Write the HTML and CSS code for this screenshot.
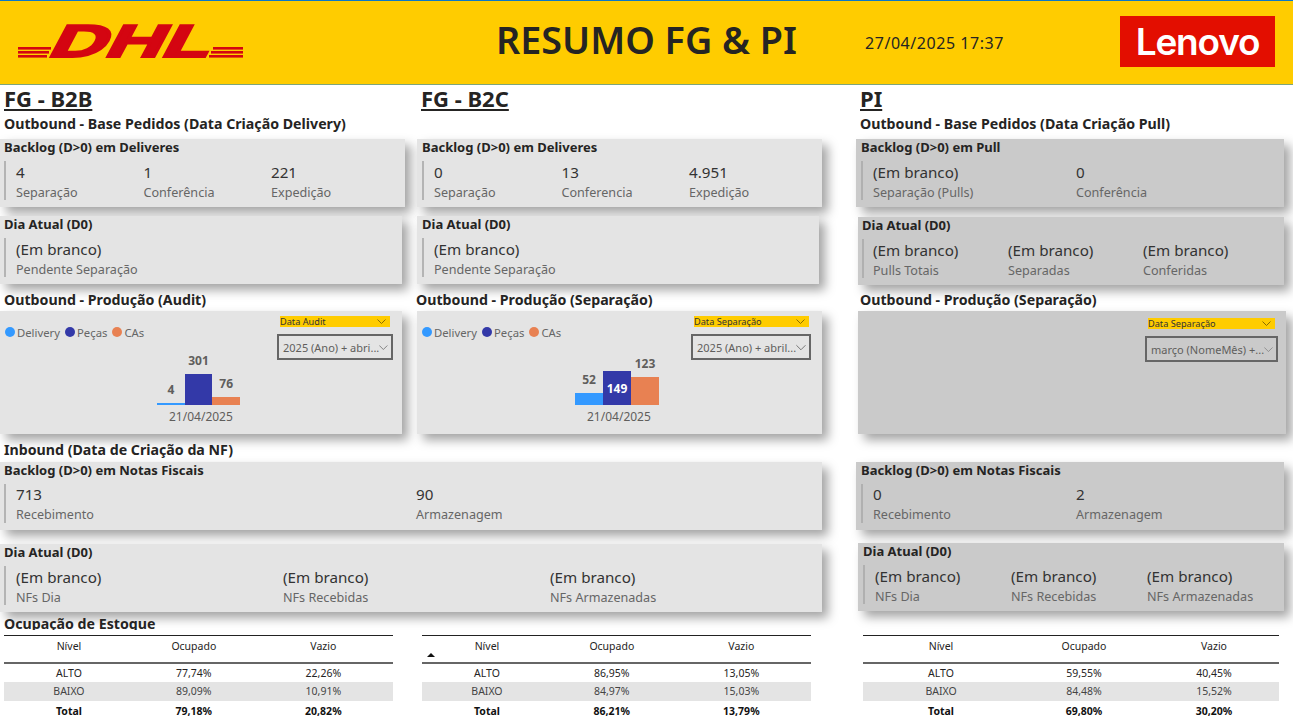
FILE: index.html
```html
<!DOCTYPE html>
<html lang="pt-BR">
<head>
    <meta charset="UTF-8">
    <title>Resumo FG & PI</title>
    <link rel="stylesheet" href="styles.css">
</head>
<body>
    <header class="topbar">
        <svg class="dhl" width="260" height="65" viewBox="0 0 260 65">
            <g fill="#d40511">
                <rect x="18" y="37" width="33" height="2.6"/><rect x="18" y="41" width="31" height="2.6"/><rect x="18" y="45" width="29" height="2.6"/>
                <rect x="213" y="37" width="30" height="2.6"/><rect x="211" y="41" width="32" height="2.6"/><rect x="209" y="45" width="34" height="2.6"/>
                <text class="dhl-text" transform="translate(46 46.5) skewX(-28) scale(1.7 1)" x="0" y="0">DHL</text>
            </g>
        </svg>
        <h1 class="title">RESUMO FG &amp; PI</h1>
        <div class="stamp">27/04/2025 17:37</div>
        <div class="lenovo">Lenovo</div>
    </header>

    <main class="dash">
        <h2 class="area">FG - B2B</h2>
        <h2 class="area">FG - B2C</h2>
        <h2 class="area">PI</h2>

        <h3 class="sub">Outbound - Base Pedidos (Data Criação Delivery)</h3>
        <div></div>
        <h3 class="sub">Outbound - Base Pedidos (Data Criação Pull)</h3>

        <section class="card">
            <h4>Backlog (D&gt;0) em Deliveres</h4>
            <div class="kpis">
                <div><b>4</b><span>Separação</span></div>
                <div><b>1</b><span>Conferência</span></div>
                <div><b>221</b><span>Expedição</span></div>
            </div>
        </section>
        <section class="card b2c">
            <h4>Backlog (D&gt;0) em Deliveres</h4>
            <div class="kpis">
                <div><b>0</b><span>Separação</span></div>
                <div><b>13</b><span>Conferencia</span></div>
                <div><b>4.951</b><span>Expedição</span></div>
            </div>
        </section>
        <section class="card pi">
            <h4>Backlog (D&gt;0) em Pull</h4>
            <div class="kpis k2">
                <div><b>(Em branco)</b><span>Separação (Pulls)</span></div>
                <div><b>0</b><span>Conferência</span></div>
            </div>
        </section>

        <section class="card short">
            <h4>Dia Atual (D0)</h4>
            <div class="kpis">
                <div><b>(Em branco)</b><span>Pendente Separação</span></div>
            </div>
        </section>
        <section class="card short b2c">
            <h4>Dia Atual (D0)</h4>
            <div class="kpis">
                <div><b>(Em branco)</b><span>Pendente Separação</span></div>
            </div>
        </section>
        <section class="card pi pi-dia">
            <h4>Dia Atual (D0)</h4>
            <div class="kpis k3-pi">
                <div><b>(Em branco)</b><span>Pulls Totais</span></div>
                <div><b>(Em branco)</b><span>Separadas</span></div>
                <div><b>(Em branco)</b><span>Conferidas</span></div>
            </div>
        </section>

        <h3 class="sub mid">Outbound - Produção (Audit)</h3>
        <h3 class="sub mid shift">Outbound - Produção (Separação)</h3>
        <h3 class="sub mid">Outbound - Produção (Separação)</h3>

        <section class="panel">
            <div class="chart">
                <div class="legend">
                    <i class="dot c1"></i><span>Delivery</span><i class="dot c2"></i><span>Peças</span><i class="dot c3"></i><span>CAs</span>
                </div>
                <div class="plot p1">
                    <div class="col"><em>4</em><i class="bar c1" style="height:2px"></i></div>
                    <div class="col"><em>301</em><i class="bar c2" style="height:31px"></i></div>
                    <div class="col"><em>76</em><i class="bar c3" style="height:8px"></i></div>
                </div>
                <div class="axis a1">21/04/2025</div>
            </div>
            <div class="slicer s1">
                <div class="slicer-head">Data Audit<svg width="9" height="5" viewBox="0 0 9 5"><path d="M.5.5l4 4 4-4" fill="none" stroke="#8a6d00"/></svg></div>
                <div class="slicer-box">2025 (Ano) + abri...<svg width="13" height="7" viewBox="0 0 13 7"><path d="M.5.5l6 6 6-6" fill="none" stroke="#555"/></svg></div>
            </div>
        </section>
        <section class="panel panel-b2c">
            <div class="chart">
                <div class="legend">
                    <i class="dot c1"></i><span>Delivery</span><i class="dot c2"></i><span>Peças</span><i class="dot c3"></i><span>CAs</span>
                </div>
                <div class="plot p2">
                    <div class="col"><em>52</em><i class="bar c1" style="height:12px"></i></div>
                    <div class="col"><i class="bar c2 inside" style="height:34px">149</i></div>
                    <div class="col"><em>123</em><i class="bar c3" style="height:28px"></i></div>
                </div>
                <div class="axis a2">21/04/2025</div>
            </div>
            <div class="slicer s2">
                <div class="slicer-head">Data Separação<svg width="9" height="5" viewBox="0 0 9 5"><path d="M.5.5l4 4 4-4" fill="none" stroke="#8a6d00"/></svg></div>
                <div class="slicer-box">2025 (Ano) + abril...<svg width="13" height="7" viewBox="0 0 13 7"><path d="M.5.5l6 6 6-6" fill="none" stroke="#555"/></svg></div>
            </div>
        </section>
        <section class="panel pi pi-panel">
            <div class="chart"></div>
            <div class="slicer s3">
                <div class="slicer-head">Data Separação<svg width="9" height="5" viewBox="0 0 9 5"><path d="M.5.5l4 4 4-4" fill="none" stroke="#8a6d00"/></svg></div>
                <div class="slicer-box">março (NomeMês) +...<svg width="13" height="7" viewBox="0 0 13 7"><path d="M.5.5l6 6 6-6" fill="none" stroke="#777"/></svg></div>
            </div>
        </section>

        <h3 class="sub mid inbound">Inbound (Data de Criação da NF)</h3>
        <div></div>

        <section class="card wide">
            <h4>Backlog (D&gt;0) em Notas Fiscais</h4>
            <div class="kpis k2-wide up">
                <div><b>713</b><span>Recebimento</span></div>
                <div><b>90</b><span>Armazenagem</span></div>
            </div>
        </section>
        <section class="card pi">
            <h4>Backlog (D&gt;0) em Notas Fiscais</h4>
            <div class="kpis k2 up">
                <div><b>0</b><span>Recebimento</span></div>
                <div><b>2</b><span>Armazenagem</span></div>
            </div>
        </section>

        <section class="card wide">
            <h4>Dia Atual (D0)</h4>
            <div class="kpis k3-wide">
                <div><b>(Em branco)</b><span>NFs Dia</span></div>
                <div><b>(Em branco)</b><span>NFs Recebidas</span></div>
                <div><b>(Em branco)</b><span>NFs Armazenadas</span></div>
            </div>
        </section>
        <section class="card pi pi-nf">
            <h4>Dia Atual (D0)</h4>
            <div class="kpis k3-nf">
                <div><b>(Em branco)</b><span>NFs Dia</span></div>
                <div><b>(Em branco)</b><span>NFs Recebidas</span></div>
                <div><b>(Em branco)</b><span>NFs Armazenadas</span></div>
            </div>
        </section>

        <h3 class="sub stock">Ocupação de Estoque</h3>
        <div></div>
        <div></div>

        <div class="tbl-wrap">
            <table class="tbl">
                <thead><tr><th>Nível</th><th>Ocupado</th><th>Vazio</th></tr></thead>
                <tbody>
                    <tr><td>ALTO</td><td>77,74%</td><td>22,26%</td></tr>
                    <tr class="odd"><td>BAIXO</td><td>89,09%</td><td>10,91%</td></tr>
                    <tr class="total"><td>Total</td><td>79,18%</td><td>20,82%</td></tr>
                </tbody>
            </table>
        </div>
        <div class="tbl-wrap tbl-b2c">
            <table class="tbl">
                <thead><tr><th class="sorted">Nível</th><th>Ocupado</th><th>Vazio</th></tr></thead>
                <tbody>
                    <tr><td>ALTO</td><td>86,95%</td><td>13,05%</td></tr>
                    <tr class="odd"><td>BAIXO</td><td>84,97%</td><td>15,03%</td></tr>
                    <tr class="total"><td>Total</td><td>86,21%</td><td>13,79%</td></tr>
                </tbody>
            </table>
        </div>
        <div class="tbl-wrap tbl-pi">
            <table class="tbl">
                <thead><tr><th>Nível</th><th>Ocupado</th><th>Vazio</th></tr></thead>
                <tbody>
                    <tr><td>ALTO</td><td>59,55%</td><td>40,45%</td></tr>
                    <tr class="odd"><td>BAIXO</td><td>84,48%</td><td>15,52%</td></tr>
                    <tr class="total"><td>Total</td><td>69,80%</td><td>30,20%</td></tr>
                </tbody>
            </table>
        </div>
    </main>
</body>
</html>
```

FILE: styles.css
```css
* { box-sizing: border-box; }
html, body { height: 100%; }
body { margin: 0; background: #fff; color: #252423; font-family: "Noto Sans", "Open Sans", sans-serif; overflow: hidden; }
h1, h2, h3, h4 { margin: 0; }

/* top bar */
.topbar { height: 85px; display: flex; align-items: center; background: #ffcc00; border-top: 1px solid #0a78c8; border-bottom: 1px solid #7ea57a; }
.dhl { flex: none; margin-top: -1px; }
.dhl-text { font: bold 46px "Liberation Sans", sans-serif; stroke: #d40511; stroke-width: 2.2px; }
.title { margin-left: 236px; width: 369px; font-size: 37.7px; font-weight: 600; line-height: 1; color: #252423; margin-top: -6px; white-space: nowrap; }
.stamp { width: 255px; font-size: 16px; letter-spacing: .55px; color: #252423; }
.lenovo { width: 155px; height: 51px; display: flex; align-items: center; justify-content: center; background: #e30e00; color: #fff; font: 600 37px Inter, sans-serif; letter-spacing: -1.2px; margin-top: -3px; }

/* canvas grid */
.dash { display: grid; grid-template-columns: 417px 439px 437px; grid-template-rows: 27px 27px 77px 74px 21px 129px 22px 82px 71px 15px 94px; }
.area { padding-left: 4px; font-size: 22px; font-weight: 700; line-height: 27px; text-decoration: underline; text-decoration-thickness: 2px; text-underline-offset: 2px; }
.sub { padding-left: 4px; font-size: 14.2px; font-weight: 700; line-height: 24px; white-space: nowrap; }
.sub.mid { line-height: 20px; }
.sub.shift { margin-left: -5px; }
.sub.inbound { grid-column: 1 / 3; }
.sub.stock { overflow: hidden; height: 15px; line-height: 18px; }

/* cards */
.card { width: 405px; height: 68px; background: #e4e4e4; box-shadow: 6px 6px 10px rgba(0, 0, 0, .36); padding: 0 4px; }
.card.short { width: 402px; }
.card.b2c { padding-left: 5px; }
.card.pi { width: 428px; background: #cacaca; padding-left: 5px; }
.card.pi-dia { margin-left: 2px; width: 426px; margin-top: 1px; padding-left: 4px; }
.card.pi-nf { margin-left: 2px; width: 426px; margin-top: -1px; }
.card.wide { width: 822px; grid-column: 1 / 3; }
.card h4 { font-size: 13px; font-weight: 700; line-height: 17px; white-space: nowrap; }
.kpis { display: grid; grid-template-columns: 127.5px 127.5px 127.5px; margin-top: 5px; height: 39px; padding: 1px 0 0 10px; border-left: 2px solid #b4b4b4; }
.pi .kpis { border-left-color: #b0b0b0; }
.kpis.up { padding-top: 0; }
.kpis.k2 { grid-template-columns: 203px 203px; }
.kpis.k2-wide { grid-template-columns: 400px 400px; }
.kpis.k3-wide { grid-template-columns: 267px 267px 267px; }
.kpis.k3-pi { grid-template-columns: 135px 135px 135px; padding-left: 9px; }
.kpis.k3-nf { grid-template-columns: 136px 136px 136px; }
.kpis b { display: block; font-size: 15.2px; font-weight: 400; line-height: 20px; color: #333; white-space: nowrap; }
.kpis span { display: block; margin-top: 1px; font-size: 12.6px; line-height: 19px; color: #666; white-space: nowrap; }

/* production panels */
.panel { width: 402px; height: 123px; display: flex; background: #e4e4e4; box-shadow: 6px 6px 10px rgba(0, 0, 0, .36); }
.panel-b2c { width: 405px; }
.panel.pi { background: #cacaca; }
.pi-panel { width: 428px; margin-left: 2px; }
.chart { flex: 1; min-width: 0; }
.legend { display: flex; align-items: center; margin: 13px 0 0 5px; height: 16px; font-size: 11.3px; color: #666; white-space: nowrap; }
.legend span { margin: 0 5px 0 2px; }
.dot { width: 10px; height: 10px; border-radius: 50%; }
.c1 { background: #3399ff; }
.c2 { background: #3339a8; }
.c3 { background: #e88152; }
.plot { display: flex; align-items: flex-end; height: 64px; margin-top: 1px; }
.plot.p1 { margin-left: 157px; }
.plot.p2 { margin-left: 158px; }
.col { width: 27.7px; display: flex; flex-direction: column; align-items: center; justify-content: flex-end; }
.p2 .col { width: 28px; }
.col em { font-size: 12px; font-style: normal; font-weight: 700; line-height: 15px; margin-bottom: 6px; color: #605e5c; }
.bar { display: block; width: 100%; }
.inside { display: flex; align-items: center; justify-content: center; font-size: 12px; font-style: normal; font-weight: 700; color: #fff; }
.axis { font-size: 12px; line-height: 20px; color: #605e5c; margin-top: 2px; }
.axis.a1 { margin-left: 169px; }
.axis.a2 { margin-left: 170px; }

/* slicers */
.slicer { flex: none; padding-top: 5px; }
.s1 { width: 125px; }
.s2 { width: 131px; }
.s3 { width: 141px; padding-top: 7px; }
.slicer-head { display: flex; align-items: center; justify-content: space-between; height: 11px; padding: 0 4px 0 0; background: #ffcc00; font-size: 9.2px; line-height: 11px; color: #333; width: 110px; margin-left: 3px; }
.s2 .slicer-head { width: 115px; }
.s3 .slicer-head { width: 127px; margin-left: 3px; }
.slicer-box { display: flex; align-items: center; justify-content: space-between; width: 116px; height: 26px; margin-top: 7px; padding: 0 3px 0 4px; border: 2px solid #666; font-size: 11px; color: #605e5c; white-space: nowrap; }
.s2 .slicer-box { width: 120px; }
.s3 .slicer-box { width: 133px; }

/* tables */
.tbl-wrap { background: #fff; padding: 5px 0 0 4px; }
.tbl-b2c { padding-left: 5px; }
.tbl-pi { padding-left: 7px; }
.tbl { width: 389px; table-layout: fixed; border-collapse: collapse; font-size: 10.5px; line-height: 14px; color: #252423; text-align: center; }
.tbl-pi .tbl { width: 416px; }
.tbl th:nth-child(1) { width: 33.4%; }
.tbl th:nth-child(2) { width: 30.8%; }
.tbl-pi .tbl th:nth-child(1) { width: 37.5%; }
.tbl-pi .tbl th:nth-child(2) { width: 31.25%; }
.tbl thead tr { border-top: 1px solid #222; border-bottom: 2px solid #666; }
.tbl th { height: 27px; padding: 0 0 6px; font-weight: 400; }
.tbl td { height: 19px; padding: 0; }
.tbl .odd { background: #e4e4e4; color: #444; }
.tbl .total td { height: 20px; font-weight: 700; color: #111; }
.sorted { position: relative; }
.sorted::after { content: ""; position: absolute; left: 5px; bottom: 5px; border: 4px solid transparent; border-top: 0; border-bottom: 4px solid #111; }
```
